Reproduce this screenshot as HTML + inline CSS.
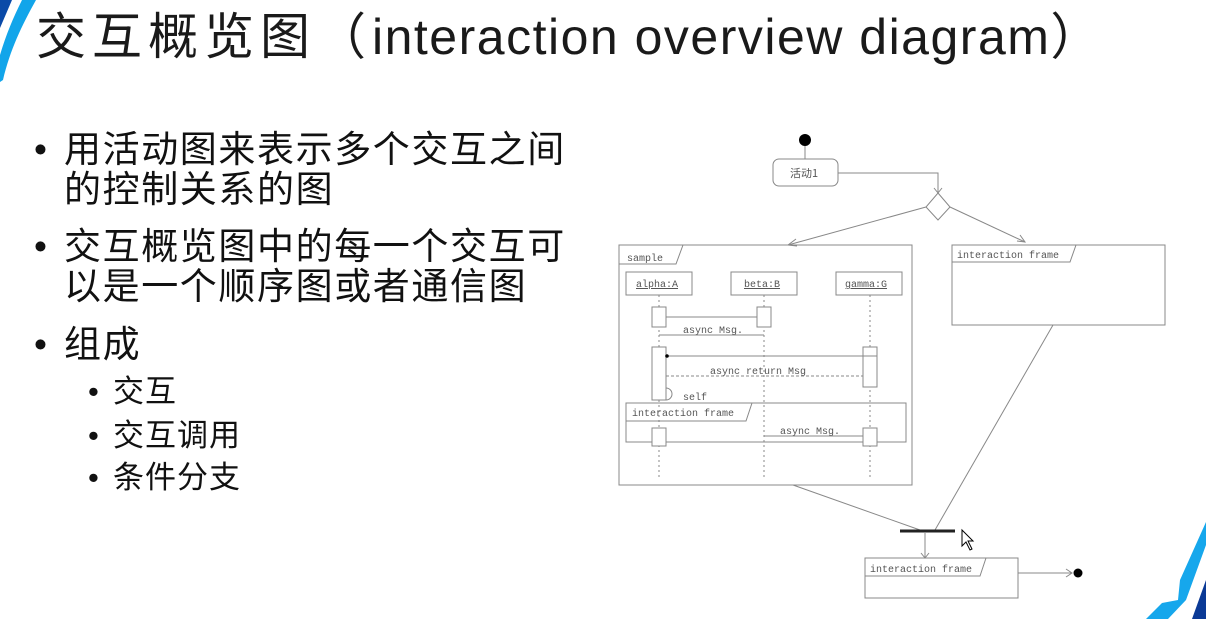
<!DOCTYPE html>
<html><head><meta charset="utf-8"><style>
html,body{margin:0;padding:0;background:#fff;width:1206px;height:619px;overflow:hidden;position:relative;font-family:"Liberation Sans","Noto Sans CJK SC",sans-serif;color:#111}
.t{position:absolute;white-space:nowrap}
.b{font-size:37px;line-height:40px;letter-spacing:1.6px}
.s{font-size:31px;line-height:34px;letter-spacing:1px}
</style></head><body>
<svg width="1206" height="619" style="position:absolute;left:0;top:0">
<path d="M0 0 L12 0 L0 28 Z" fill="#0a4aa8"/>
<path d="M22 0 L36 0 C22 25 10 50 3 80 L0 82 L0 55 C6 35 13 18 22 0 Z" fill="#12a5ea"/>
<path d="M1206 522 L1206 545 L1186 600 L1168 619 L1146 619 L1162 603 L1178 600 L1180 580 Z" fill="#16a7ec"/>
<path d="M1206 580 L1206 619 L1192 619 Z" fill="#0b3a96"/>
</svg>
<div class="t" style="left:36px;top:8px;font-size:50px;line-height:58px;color:#1a1a1a"><span style="letter-spacing:6px">交互概览图（</span><span style="letter-spacing:1.5px">interaction overview diagram</span>）</div>
<div class="t b" style="left:34px;top:130px">•</div>
<div class="t b" style="left:64px;top:130px">用活动图来表示多个交互之间<br>的控制关系的图</div>
<div class="t b" style="left:34px;top:227px">•</div>
<div class="t b" style="left:64px;top:227px">交互概览图中的每一个交互可<br>以是一个顺序图或者通信图</div>
<div class="t b" style="left:34px;top:325px">•</div>
<div class="t b" style="left:64px;top:325px">组成</div>
<div class="t s" style="left:88px;top:375px">•</div><div class="t s" style="left:113px;top:375px">交互</div>
<div class="t s" style="left:88px;top:419px">•</div><div class="t s" style="left:113px;top:419px">交互调用</div>
<div class="t s" style="left:88px;top:461px">•</div><div class="t s" style="left:113px;top:461px">条件分支</div>
<svg width="1206" height="619" style="position:absolute;left:0;top:0" font-family="Liberation Mono, monospace" font-size="10" fill="none" stroke="#888" stroke-width="1">
<circle cx="805" cy="140" r="6" fill="#000" stroke="none"/>
<line x1="805" y1="146" x2="805" y2="159"/>
<rect x="773" y="159" width="65" height="27" rx="6"/>
<text x="790" y="177" fill="#555" stroke="none" font-family="Noto Sans CJK SC" font-size="11">活动1</text>
<polyline points="838,173 938,173 938,193"/>
<path d="M934 188 L938 193 L942 188"/>
<path d="M938 193 L950 207 L938 220 L926 207 Z"/>
<line x1="926" y1="207" x2="788" y2="245"/><path d="M796 239 L788 245 L797 246"/>
<line x1="950" y1="207" x2="1025" y2="242"/><path d="M1017 241 L1025 242 L1020 235"/>
<rect x="619" y="245" width="293" height="240"/>
<path d="M619 264 L676 264 L683 245"/>
<text x="627" y="261" fill="#555" stroke="none">sample</text>
<rect x="626" y="272" width="66" height="23"/><rect x="731" y="272" width="66" height="23"/><rect x="836" y="272" width="66" height="23"/>
<text x="636" y="287" fill="#555" stroke="none" text-decoration="underline">alpha:A</text>
<text x="744" y="287" fill="#555" stroke="none" text-decoration="underline">beta:B</text>
<text x="845" y="287" fill="#555" stroke="none" text-decoration="underline">gamma:G</text>
<g stroke-dasharray="2,3"><line x1="659" y1="295" x2="659" y2="480"/><line x1="764" y1="295" x2="764" y2="480"/><line x1="870" y1="295" x2="870" y2="480"/></g>
<rect x="652" y="307" width="14" height="20" fill="#fff"/><rect x="757" y="307" width="14" height="20" fill="#fff"/>
<line x1="666" y1="317" x2="757" y2="317"/>
<line x1="764" y1="335" x2="659" y2="335"/>
<text x="683" y="333" fill="#555" stroke="none">async Msg.</text>
<rect x="652" y="347" width="14" height="53" fill="#fff"/><rect x="863" y="347" width="14" height="40" fill="#fff"/>
<line x1="877" y1="356" x2="666" y2="356"/><circle cx="667" cy="356" r="1.8" fill="#000" stroke="none"/>
<line x1="666" y1="376" x2="863" y2="376" stroke-dasharray="3,2"/>
<text x="710" y="374" fill="#555" stroke="none">async return Msg</text>
<path d="M666 388 A6 6 0 0 1 666 400"/>
<text x="683" y="400" fill="#555" stroke="none">self</text>
<rect x="626" y="403" width="280" height="39"/>
<path d="M626 421 L746 421 L752 403"/>
<text x="632" y="416" fill="#555" stroke="none">interaction frame</text>
<rect x="652" y="428" width="14" height="18" fill="#fff"/><rect x="863" y="428" width="14" height="18" fill="#fff"/>
<line x1="764" y1="436" x2="863" y2="436"/>
<text x="780" y="434" fill="#555" stroke="none">async Msg.</text>
<rect x="952" y="245" width="213" height="80"/>
<path d="M952 262 L1070 262 L1076 245"/>
<text x="957" y="258" fill="#555" stroke="none">interaction frame</text>
<line x1="1053" y1="325" x2="935" y2="530"/>
<line x1="793" y1="485" x2="920" y2="530"/>
<line x1="900" y1="531" x2="955" y2="531" stroke="#222" stroke-width="3"/>
<line x1="925" y1="533" x2="925" y2="558"/><path d="M921 553 L925 558 L929 553"/>
<rect x="865" y="558" width="153" height="40"/>
<path d="M865 576 L980 576 L986 558"/>
<text x="870" y="572" fill="#555" stroke="none">interaction frame</text>
<line x1="1018" y1="573" x2="1072" y2="573"/><path d="M1066 569 L1072 573 L1066 577"/>
<circle cx="1078" cy="573" r="4.5" fill="#000" stroke="none"/>
<path d="M962 530 L962 546 L966 542 L970 550 L972 549 L968 541 L973 541 Z" fill="#fff" stroke="#000"/>
</svg>
</body></html>
